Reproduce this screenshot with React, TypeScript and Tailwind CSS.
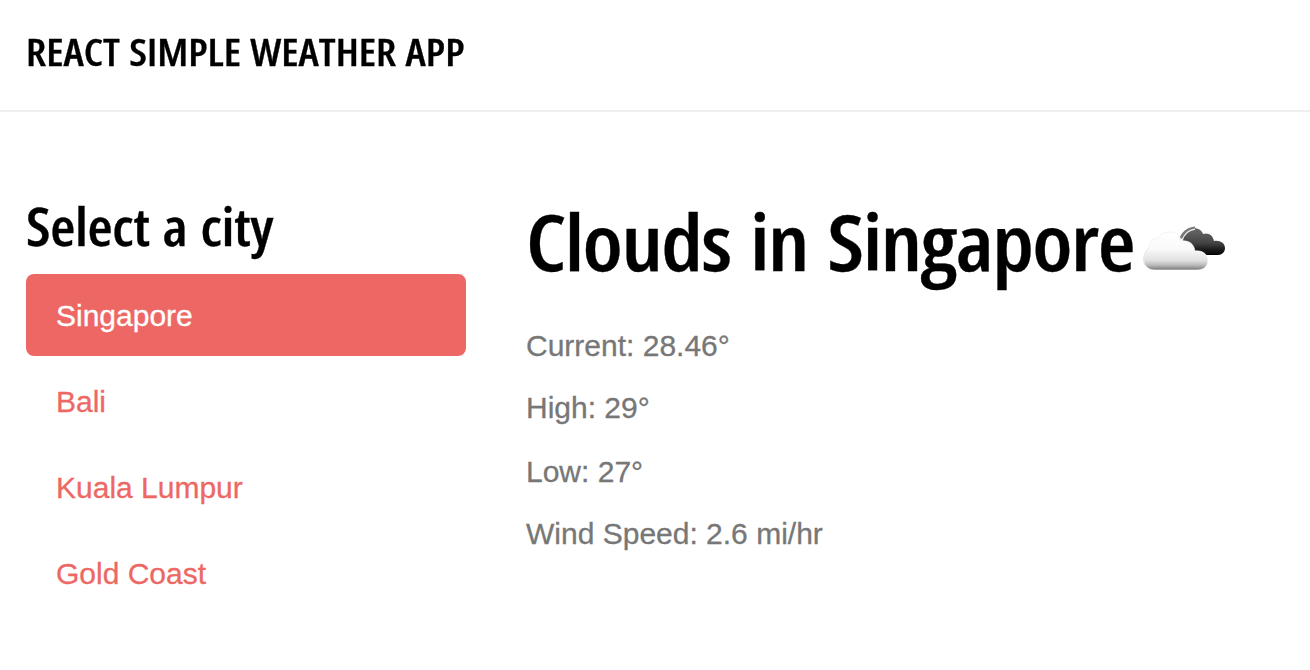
const cities = ['Singapore', 'Bali', 'Kuala Lumpur', 'Gold Coast'];
const readings = ['Current: 28.46°', 'High: 29°', 'Low: 27°', 'Wind Speed: 2.6 mi/hr'];

function CloudsIcon() {
  return (
    <svg className="mt-[18px] shrink-0" width="90" height="52" viewBox="0 0 90 52" aria-hidden="true">
      <defs>
        <linearGradient id="dark" x1="0" y1="0" x2="0" y2="1">
          <stop offset="0" stopColor="#6a6a6a" />
          <stop offset="0.55" stopColor="#444" />
          <stop offset="0.8" stopColor="#1c1c1c" />
          <stop offset="1" stopColor="#000" />
        </linearGradient>
        <linearGradient id="light" x1="0" y1="0" x2="0" y2="1">
          <stop offset="0" stopColor="#fff" />
          <stop offset="0.45" stopColor="#fafafa" />
          <stop offset="0.75" stopColor="#e0e0e0" />
          <stop offset="0.87" stopColor="#bcbcbc" />
          <stop offset="1" stopColor="#777" />
        </linearGradient>
        <filter id="soft" x="-10%" y="-10%" width="120%" height="120%">
          <feGaussianBlur stdDeviation="0.6" />
        </filter>
      </defs>
      <g filter="url(#soft)">
        <path
          d="M42 16C45 9 51 7 57 8.500C60 9.500 62 11 63 14C68 12 73 15 74 21C80 20 85 23 85 28C85 32 82 35 78 35H60C50 34 42 25 42 16Z"
          fill="url(#dark)"
        />
        <path d="M39 21.500C42 13 47 8 55 7.500" fill="none" stroke="#7a7a7a" strokeWidth="2" />
        <path d="M42 21C44 14 49 10 55 9.200" fill="none" stroke="#eee" strokeWidth="1.300" />
        <path
          d="M15 50C8 50 3.500 45.500 3.500 39.500C3.500 34 6 30 9 28C9 21 13 18 18 18C20 14 25 12 31 12C36 12 40 16 41 21C49 20 54 24 55 31C63 30 68 35 68 40C68 46 64 50 57 50Z"
          fill="url(#light)"
          stroke="#fff"
          strokeWidth="0.600"
        />
        <path d="M9 28C9 21 13 18 18 18C20 14 25 12 31 12C36 12 40 16 41 21" fill="none" stroke="#ededed" strokeWidth="0.800" />
        <path d="M9 28C6 30 3.500 34 3.500 39.500C3.500 43 5 46 8 48" fill="none" stroke="#e2e2e2" strokeWidth="0.800" />
      </g>
    </svg>
  );
}

export default function App() {
  return (
    <div className="min-h-[670px] bg-white font-['Liberation_Sans',sans-serif] text-[30px] text-[#777777] [-webkit-text-stroke:0.3px]">
      <header className="flex h-[112px] items-start border-b-2 border-[#eeeeee] pt-[31px] pl-[26px]">
        <h1 className="origin-left scale-x-110 font-['Open_Sans',sans-serif] text-[38px] leading-[40px] font-semibold whitespace-nowrap text-black [font-stretch:75%] [word-spacing:1.5px]">
          REACT SIMPLE WEATHER APP
        </h1>
      </header>
      <main className="flex">
        <section className="w-[466px] pt-[90px] pl-[26px]">
          <h2 className="h-[72px] origin-left scale-x-[1.11] font-['Open_Sans',sans-serif] text-[52px] leading-[48px] font-semibold tracking-[-0.3px] whitespace-nowrap text-black [font-stretch:75%] [word-spacing:2.5px]">
            Select a city
          </h2>
          <nav className="flex flex-col gap-1">
            {cities.map((city, i) => (
              <a
                key={city}
                className={
                  i === 0
                    ? 'flex h-[82px] items-center rounded-lg bg-[#ed6864] px-[30px] text-white'
                    : 'flex h-[82px] items-center rounded-lg px-[30px] text-[#ed6864]'
                }
              >
                {city}
              </a>
            ))}
          </nav>
        </section>
        <section className="flex-1 pt-[90px] pl-[60px]">
          <div className="flex h-[122px] items-start">
            <h2 className="w-[614px] font-['Open_Sans',sans-serif] text-[77px] leading-[80px] font-semibold whitespace-nowrap text-black [font-stretch:75%]">
              <span className="inline-block origin-left scale-x-[1.13] tracking-[-1.4px] [word-spacing:4.5px]">Clouds in Singapore</span>
            </h2>
            <CloudsIcon />
          </div>
          <div className="flex flex-col gap-5">
            {readings.map((line) => (
              <p key={line} className="leading-[43px] even:-mt-px even:mb-px">
                {line}
              </p>
            ))}
          </div>
        </section>
      </main>
    </div>
  );
}
